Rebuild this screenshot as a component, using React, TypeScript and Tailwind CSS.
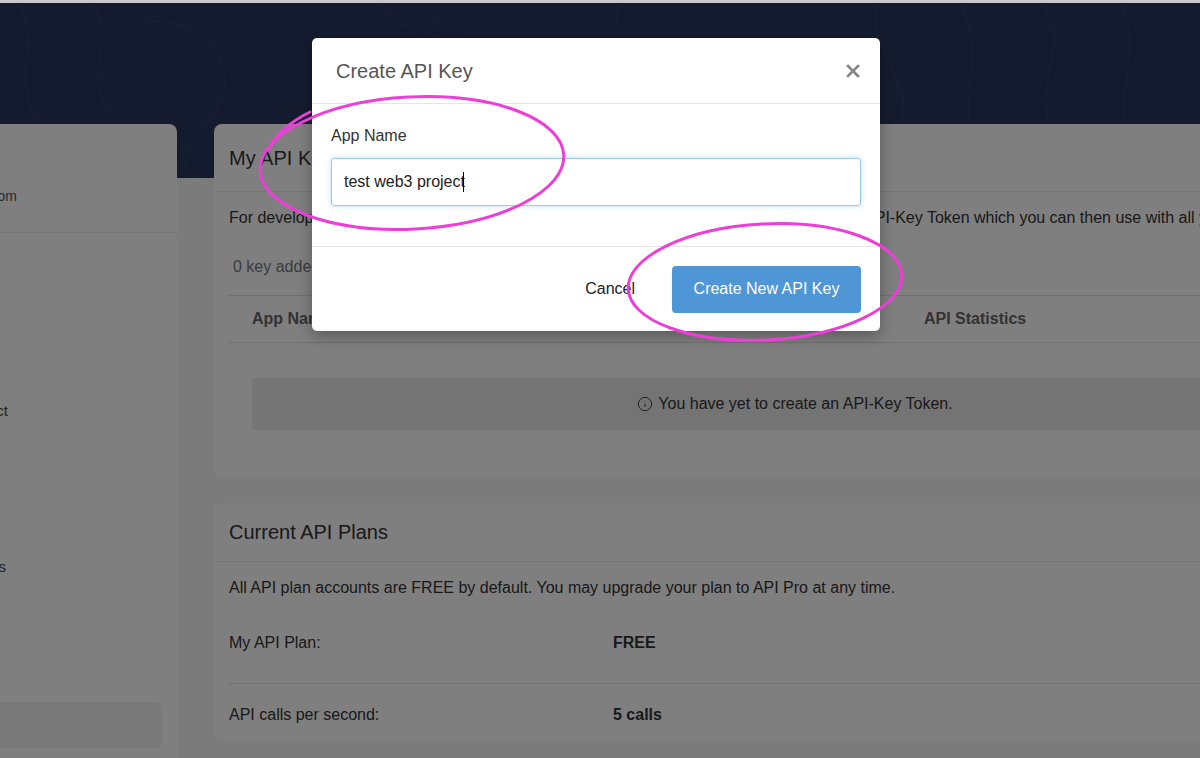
import { Info } from "lucide-react";

const font = { fontFamily: '"Liberation Sans", Arial, sans-serif' };

// left nav rows: the card runs off the left edge, so only word ends show
const navItems = [
  { label: "Dashboard", w: "w-[10px]" },
  { label: "Account", w: "w-[10px]" },
  { label: "Watch List", w: "w-[10px]" },
  { label: "Verified Contract", w: "w-[31px]" },
  { label: "Token Ignore List", w: "w-[10px]" },
  { label: "Private Name Tag", w: "w-[10px]" },
  { label: "API Keys", w: "w-[29px]" },
  { label: "Custom ABI", w: "w-[10px]" },
];

function TopoLines() {
  return (
    <svg className="absolute inset-0 w-full h-full" viewBox="0 0 1200 175" fill="none">
      <g stroke="rgba(255,255,255,0.05)" strokeWidth="1.2">
        <path d="M20 0 C40 40 10 80 40 120 S60 170 30 175" />
        <path d="M90 0 C120 30 80 70 110 110 S150 160 120 175" />
        <path d="M140 20 C200 10 240 60 220 100 S160 150 200 175" />
        <path d="M380 0 C420 50 500 30 520 80 S480 150 540 175" />
        <path d="M430 10 C470 60 560 50 570 100" />
        <path d="M620 0 C600 60 660 90 640 175" />
        <path d="M880 0 C860 40 920 80 900 130 S940 170 920 175" />
        <path d="M960 0 C990 50 950 100 980 175" />
        <path d="M1040 0 C1080 40 1020 90 1060 140 S1100 170 1080 175" />
        <path d="M1120 0 C1150 50 1100 100 1140 175" />
      </g>
    </svg>
  );
}

function ApiKeysCard() {
  return (
    <div className="bg-white rounded-lg">
      <div className="h-[68px] px-[15px] flex items-center border-b border-[#ececec]">
        <h2 className="text-[20px] text-[#333]">My API Keys</h2>
      </div>
      <div className="px-[15px] pt-[16px] pb-[48px]">
        <p className="text-[16px] leading-[20px] text-[#333] whitespace-nowrap">
          For developers wishing to use the API service, you will need to sign in and then create an API-Key Token which you can then use with all your API requests.
        </p>
        <p className="mt-[29px] pl-[4px] text-[16px] leading-[20px] text-[#777]">0 key added (out of 3 max limit)</p>
        <div className="mt-[18px] h-[48px] grid grid-cols-[331px_341px_1fr] items-center border-y border-[#e2e2e2] text-[16px] font-bold text-[#666]">
          <div className="pl-[23px]">App Name</div>
          <div className="pl-[23px]">API Key</div>
          <div className="pl-[23px]">API Statistics</div>
        </div>
        <div className="mt-[35px] mx-[23px] h-[52px] rounded bg-[#e9e9e9] flex items-center justify-center gap-[5px] text-[16px] text-[#333]">
          <Info size={16} strokeWidth={1.4} />
          <span>You have yet to create an API-Key Token.</span>
        </div>
      </div>
    </div>
  );
}

function PlansCard() {
  return (
    <div className="bg-white rounded-lg">
      <div className="h-[59px] px-[15px] flex items-center border-b border-[#ececec]">
        <h2 className="text-[20px] text-[#333]">Current API Plans</h2>
      </div>
      <div className="px-[15px] pt-[16px] pb-[16px] text-[16px] leading-[20px] text-[#333]">
        <p>All API plan accounts are FREE by default. You may upgrade your plan to API Pro at any time.</p>
        <div className="mt-[35px] pb-[30px] flex border-b border-[#e2e2e2]">
          <span className="w-[384px]">My API Plan:</span>
          <span className="font-bold">FREE</span>
        </div>
        <div className="pt-[21px] flex">
          <span className="w-[384px]">API calls per second:</span>
          <span className="font-bold">5 calls</span>
        </div>
      </div>
    </div>
  );
}

function CreateKeyModal() {
  return (
    <div className="absolute left-[312px] top-[38px] w-[568px] bg-white rounded-[5px] shadow-[0_5px_15px_rgba(0,0,0,0.3)]">
      <div className="h-[66px] pl-[24px] pr-[20px] flex items-center justify-between border-b border-[#e5e5e5]">
        <h3 className="text-[20px] text-[#555]">Create API Key</h3>
        <button className="w-[14px] h-[14px] flex items-center justify-center" aria-label="Close">
          <svg width="14" height="14" viewBox="0 0 14 14" stroke="#858585" strokeWidth="2.6" strokeLinecap="square">
            <path d="M2 2 L12 12 M12 2 L2 12" />
          </svg>
        </button>
      </div>
      <div className="px-[19px] pt-[22px] pb-[40px]">
        <label className="block text-[16px] leading-[20px] text-[#333]">App Name</label>
        <div className="mt-[12px] h-[48px] px-[12px] flex items-center border border-[#9ecaed] rounded-[3px] shadow-[0_0_5px_rgba(102,175,233,0.45)] text-[16px] text-[#222]">
          test web3 project
          <span className="inline-block w-px h-[20px] bg-black -ml-[2px]" />
        </div>
      </div>
      <div className="h-[85px] px-[19px] flex items-center justify-end gap-[37px] border-t border-[#e5e5e5]">
        <button className="text-[16px] text-[#222]">Cancel</button>
        <button className="w-[189px] h-[47px] rounded-[4px] bg-[#4f96d6] text-white text-[16px]">Create New API Key</button>
      </div>
    </div>
  );
}

export default function App() {
  return (
    <div className="relative w-[1200px] h-[758px] overflow-hidden bg-[#f6f6f6]" style={font}>
      <div className="h-[3px] bg-[#c9c9c9] relative z-30" />
      <header className="relative h-[175px] bg-[#2a365c] overflow-hidden">
        <TopoLines />
      </header>

      <div className="relative -mt-[54px] flex">
        <aside className="w-[200px] -ml-[23px] shrink-0 h-[700px] bg-white rounded-lg flex flex-col">
          <div className="pt-[62px] pb-[26px] border-b border-[#ececec]">
            <div className="w-[40px] flex justify-end whitespace-nowrap text-[14px] leading-[20px] text-[#555]">
              someone@example.com
            </div>
          </div>
          <nav className="-mt-[4px] flex flex-col">
            {navItems.map((item) => (
              <div key={item.label} className="h-[52px] flex items-center">
                <div className={`${item.w} flex justify-end whitespace-nowrap text-[15px] text-[#444]`}>
                  {item.label}
                </div>
              </div>
            ))}
          </nav>
          <div className="mt-[57px] mr-[15px] h-[46px] rounded-md bg-[#f0f0f0]" />
        </aside>

        <main className="ml-[37px] w-[1162px] shrink-0 flex flex-col gap-[25px]">
          <ApiKeysCard />
          <PlansCard />
        </main>
      </div>

      <div className="absolute inset-0 bg-black/50" />

      <CreateKeyModal />

      <svg className="absolute inset-0 pointer-events-none" width="1200" height="758" viewBox="0 0 1200 758" fill="none">
        <g stroke="#ec3fd8" strokeWidth="3" strokeLinecap="round">
          <ellipse cx="412" cy="163" rx="152" ry="66" transform="rotate(-3 412 163)" />
          <path d="M268 150 C275 135 290 122 310 112" />
          <ellipse cx="765" cy="282" rx="137" ry="58" transform="rotate(-3 765 282)" />
        </g>
      </svg>
    </div>
  );
}
